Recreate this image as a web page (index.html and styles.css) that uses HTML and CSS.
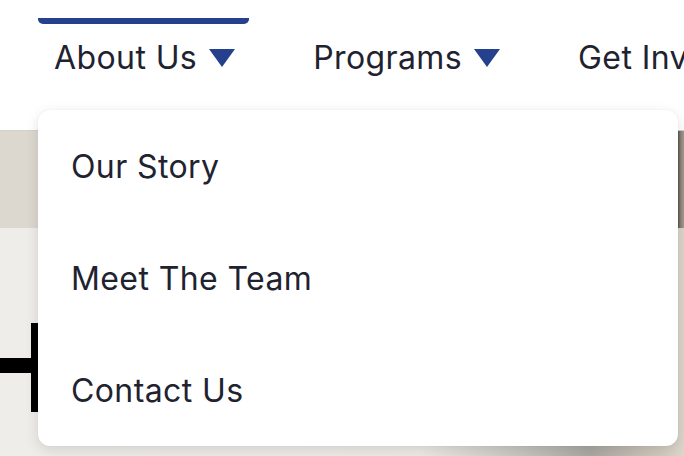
FILE: index.html
```html
<!DOCTYPE html>
<html lang="en">
<head>
<meta charset="utf-8">
<title>Nav dropdown</title>
<link rel="stylesheet" href="styles.css">
</head>
<body>
<div class="page">
  <header class="header">
    <nav class="nav">
      <div class="nav-item active">
        <span class="indicator"></span>
        <span class="label">About Us <span class="caret"></span></span>
      </div>
      <div class="nav-item">
        <span class="indicator"></span>
        <span class="label">Programs <span class="caret"></span></span>
      </div>
      <div class="nav-item">
        <span class="indicator"></span>
        <span class="label">Get Involved</span>
      </div>
    </nav>
  </header>
  <section class="hero">
    <div class="hero-top"></div>
    <div class="hero-bottom"></div>
    <div class="mark"><span class="mark-h"></span><span class="mark-v"></span></div>
  </section>
  <ul class="dropdown">
    <li class="dropdown-item">Our Story</li>
    <li class="dropdown-item">Meet The Team</li>
    <li class="dropdown-item">Contact Us</li>
  </ul>
</div>
</body>
</html>
```
FILE: styles.css
```css
* { box-sizing: border-box; }
html, body { margin: 0; padding: 0; }
body {
  font-family: Inter, "Noto Sans", sans-serif;
  color: #1f2330;
  background: #ffffff;
}
.page {
  position: relative;
  width: 684px;
  height: 456px;
  overflow: hidden;
  display: flex;
  flex-direction: column;
}
.header {
  height: 131px;
  background: #ffffff;
  border-bottom: 1px solid #d2d0cc;
  flex: none;
}
.nav {
  display: flex;
  gap: 48px;
  padding-left: 38px;
  white-space: nowrap;
}
.nav-item {
  display: flex;
  flex-direction: column;
  padding: 0 14px 0 16px;
  margin-top: 18px;
  flex: none;
}
.indicator {
  display: block;
  height: 6px;
  margin: 0 -14px 14px -16px;
  border-radius: 0 0 5px 5px;
  background: transparent;
}
.nav-item.active .indicator { background: #25408c; }
.label {
  display: flex;
  align-items: center;
  gap: 12px;
  font-size: 32px;
  line-height: normal;
  letter-spacing: 0.4px;
}
.caret {
  width: 0;
  height: 0;
  border-left: 13.5px solid transparent;
  border-right: 13.5px solid transparent;
  border-top: 18px solid #25408c;
}
.hero {
  position: relative;
  flex: 1;
  display: flex;
  flex-direction: column;
}
.hero-top {
  height: 97px;
  background: linear-gradient(to right, #dcd7cf 0, #ddd8d0 670px, #58574d 678px, #8e877b 681px, #a69b8d 684px);
}
.hero-bottom {
  flex: 1;
  background: linear-gradient(to right, #efede9 0, #eeebe7 420px, #c4c2bd 530px, #a9a8a3 590px, #c7c0b5 640px, #ddd6cb 684px);
}
.mark {
  position: absolute;
  left: 0;
  top: 192px;
  width: 38px;
  height: 89px;
}
.mark-v {
  position: absolute;
  left: 31px;
  top: 0;
  width: 7px;
  height: 89px;
  background: #000;
}
.mark-h {
  position: absolute;
  left: 0;
  top: 35px;
  width: 38px;
  height: 15px;
  background: #000;
}
.dropdown {
  position: absolute;
  left: 38px;
  top: 110px;
  width: 640px;
  margin: 0;
  padding: 0;
  list-style: none;
  background: #ffffff;
  border-radius: 12px;
  box-shadow: 0 4px 14px rgba(0, 0, 0, 0.12), 0 0 2px rgba(0, 0, 0, 0.06);
}
.dropdown-item {
  height: 112px;
  display: flex;
  align-items: center;
  padding-left: 33px;
  font-size: 32px;
  letter-spacing: 0.4px;
  color: #1f2330;
}
```
